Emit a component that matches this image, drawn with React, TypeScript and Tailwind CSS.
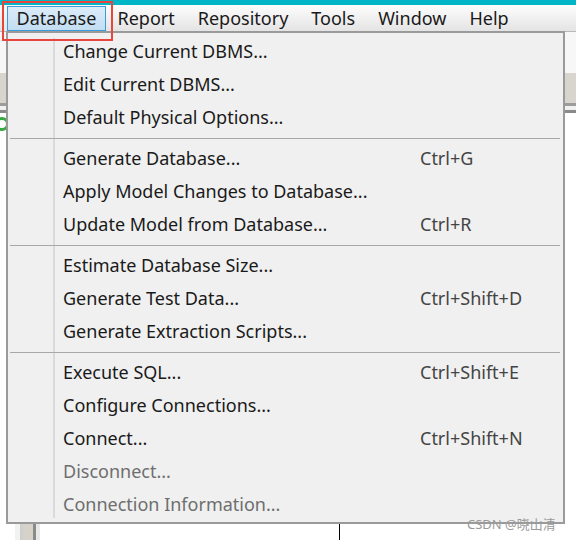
import React from "react";

type Item = { label: string; shortcut?: string; disabled?: boolean } | "sep";

const items: Item[] = [
  { label: "Change Current DBMS..." },
  { label: "Edit Current DBMS..." },
  { label: "Default Physical Options..." },
  "sep",
  { label: "Generate Database...", shortcut: "Ctrl+G" },
  { label: "Apply Model Changes to Database..." },
  { label: "Update Model from Database...", shortcut: "Ctrl+R" },
  "sep",
  { label: "Estimate Database Size..." },
  { label: "Generate Test Data...", shortcut: "Ctrl+Shift+D" },
  { label: "Generate Extraction Scripts..." },
  "sep",
  { label: "Execute SQL...", shortcut: "Ctrl+Shift+E" },
  { label: "Configure Connections..." },
  { label: "Connect...", shortcut: "Ctrl+Shift+N" },
  { label: "Disconnect...", disabled: true },
  { label: "Connection Information...", disabled: true },
];

const menus = ["Report", "Repository", "Tools", "Window", "Help"];

export default function App() {
  return (
    <div className="relative w-[576px] h-[540px] overflow-hidden bg-white font-['Noto_Sans',sans-serif] text-[#1a1a1a]">
      <div className="h-[5px] bg-[#00b5c6]" />
      {/* menu bar */}
      <div className="flex h-[27px] items-center border-b border-[#b8b8b8] bg-gradient-to-b from-[#fdfdfd] to-[#e4e4e4] text-[18px]">
        <div className="ml-[7px] flex h-[25px] w-[99px] items-center justify-center border border-[#3c9ad8] bg-gradient-to-b from-[#dcecf9] to-[#c2ddf2]">
          Database
        </div>
        {menus.map((m) => (
          <div key={m} className="px-[11.5px]">
            {m}
          </div>
        ))}
      </div>

      {/* application background */}
      <div className="h-[41px] bg-[#f7f7f7]" />
      <div className="h-[30px] bg-[#d8d5ce]" />
      <div className="h-[3px] bg-[#9c9c9c]" />
      <div className="h-[4px] bg-[#f0f0f0]" />
      <div className="h-[3px] bg-[#8a8a8a]" />
      <div className="flex h-[22px] items-center bg-white">
        <span className="ml-[-5px] h-[14px] w-[14px] rounded-full border-[3px] border-[#3aa845]" />
      </div>
      <div className="flex h-[405px]">
        <div className="ml-[15px] w-[5px] bg-[#f2f2f2]" />
        <div className="w-[3px] bg-[#cfcfcf]" />
        <div className="w-[10px] bg-[#d6d2ca]" />
        <div className="w-[3px] bg-[#8a8a8a]" />
        <div className="w-[4px] bg-[#e8e8e8]" />
        <div className="ml-[299px] w-px bg-black" />
      </div>

      {/* dropdown */}
      <div className="absolute left-[6px] top-[31px] h-[493px] w-[559px] border-2 border-[#9a9a9a] bg-[#f0f0f0] pt-[2px] text-[18px]">
        <div className="absolute left-[45px] top-[5px] bottom-[4px] w-[2px] bg-[#dadada]" />
        {items.map((it, i) =>
          it === "sep" ? (
            <div key={i} className="relative flex h-[8px] items-center pl-[2px] pr-[3px]">
              <div className="h-px w-full bg-[#a8a8a8]" />
            </div>
          ) : (
            <div
              key={i}
              className={`relative flex h-[33px] items-center ${it.disabled ? "text-[#6e6e6e]" : ""}`}
            >
              <span className="ml-[55px] w-[357px] whitespace-nowrap">{it.label}</span>
              <span className="text-[#444]">{it.shortcut}</span>
            </div>
          )
        )}
      </div>

      {/* annotation box */}
      <div className="absolute left-[2px] top-px h-[40px] w-[111px] border-2 border-[#e8453c]" />

      {/* watermark */}
      <div className="absolute left-[467px] top-[514px] text-[13px] leading-[20px] text-[#9a9a9a] font-['Noto_Sans','Noto_Sans_CJK_SC',sans-serif]">
        CSDN @晓山清
      </div>
    </div>
  );
}
